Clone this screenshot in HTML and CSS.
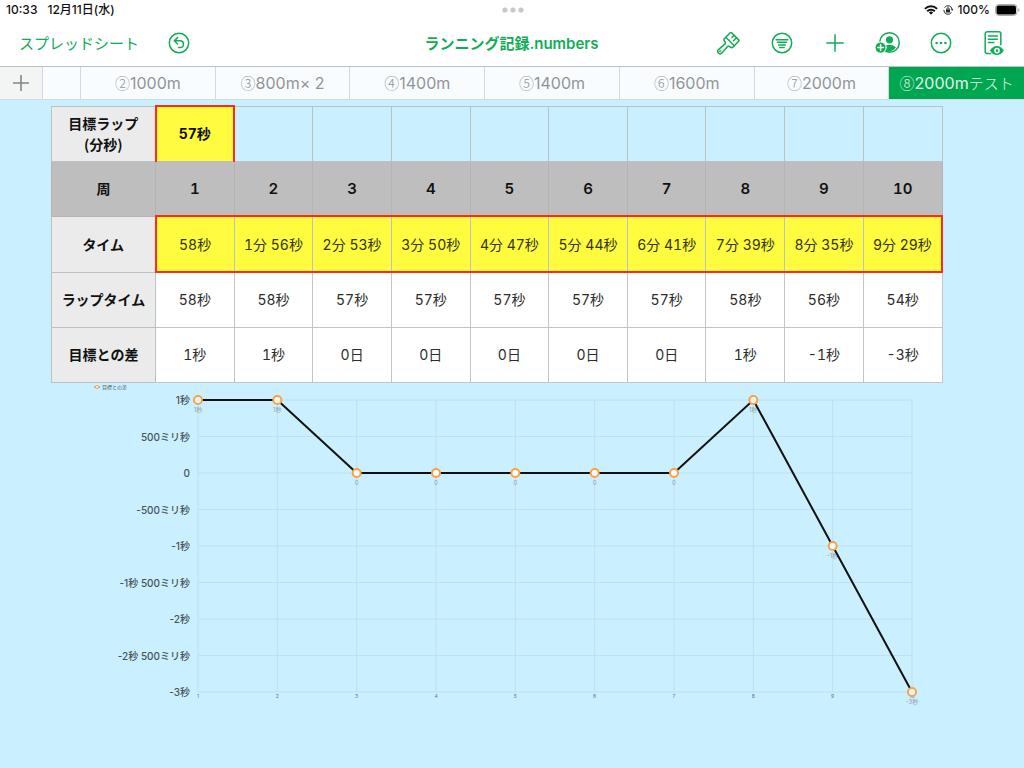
FILE: index.html
```html
<!DOCTYPE html>
<html lang="ja">
<head>
    <meta charset="UTF-8">
    <meta name="viewport" content="width=device-width, initial-scale=1.0">
    <title>ランニング記録.numbers</title>
    <link rel="stylesheet" href="styles.css">
</head>
<body>

<div class="status-bar">
    <div class="status-left">
        <span>10:33</span>
        <span>12月11日(水)</span>
    </div>
    <svg class="dots" width="22" height="6" viewBox="0 0 22 6" fill="#c8c8c8">
        <circle cx="3" cy="3" r="2.6"/><circle cx="11" cy="3" r="2.6"/><circle cx="19" cy="3" r="2.6"/>
    </svg>
    <div class="status-right">
        <svg width="14" height="10" viewBox="0 0 14 10" fill="none" stroke="#111" stroke-width="2">
            <path d="M0.9 3.9a8.6 8.600 0 0 1 12.200 0M3.200 6.300a5.300 5.300 0 0 1 7.600 0"/>
            <path d="M7 9.8L4.9 7.6a3 3 0 0 1 4.2 0z" fill="#111" stroke="none"/>
        </svg>
        <svg width="10" height="10" viewBox="0 0 10 10" fill="none" stroke="#222" stroke-width="1">
            <path d="M1.500 2.600A4.200 4.200 0 0 1 9.200 5M8.500 7.400A4.200 4.200 0 0 1 0.800 5"/>
            <path d="M8 4.300h2.200L9.200 6z" fill="#222" stroke="none"/>
            <rect x="3" y="4.500" width="4" height="3" fill="#222" stroke="none"/>
            <path d="M4 4.800V3.700a1 1 0 0 1 2 0v1.100"/>
        </svg>
        <span>100%</span>
        <svg width="25" height="12" viewBox="0 0 25 12">
            <rect x="0.5" y="0.5" width="21.5" height="11" rx="3.5" fill="#fff" stroke="#aaa"/>
            <rect x="1.5" y="1.5" width="19.5" height="9" rx="2" fill="#000"/>
            <path d="M23.4 4.2a2 2 0 0 1 0 3.6z" fill="#999"/>
        </svg>
    </div>
</div>

<header class="toolbar">
    <div class="toolbar-left">
        <a href="#" class="back-link">スプレッドシート</a>
        <button class="undo-button" aria-label="取り消す">
            <svg width="22" height="22" viewBox="0 0 22 22">
                <circle cx="11" cy="11" r="9.7"/>
                <path d="M9.6 5.6L6.3 8.8l3.3 3.2M6.5 8.8h5.6a3.3 3.3 0 0 1 0 6.7h-1.4"/>
            </svg>
        </button>
    </div>
    <h1 class="title">ランニング記録.numbers</h1>
    <div class="toolbar-right">
        <button aria-label="フォーマット">
            <svg width="24" height="26" viewBox="0 0 24 26">
                <g transform="translate(10 14.500) rotate(45)">
                    <path d="M-6 -4V-10.500Q-6 -11.500 -5 -11.500H5Q6 -11.500 6 -10.500V-2.500Q6 -0.800 4.300 -0.600L3 -0.400Q1.700 -0.200 1.800 1L2.400 9.600A2.400 2.400 0 0 1 -2.400 9.600L-1.800 1Q-1.700 -0.200 -3 -0.400L-4.300 -0.600Q-6 -0.800 -6 -2.500z"/>
                    <path d="M-6 -4.300H6M-1.500 -11.500V-8.500M2 -11.500V-7.200"/>
                    <circle cx="0" cy="9.600" r="0.400"/>
                </g>
            </svg>
        </button>
        <button aria-label="整理">
            <svg width="22" height="22" viewBox="0 0 22 22">
                <circle cx="11" cy="11" r="9.7"/>
                <path d="M5.2 7.7h11.6M6.4 10.3h9.2M7.6 12.9h6.8M8.8 15.5h4.4"/>
            </svg>
        </button>
        <button aria-label="挿入">
            <svg width="18" height="18" viewBox="0 0 18 18"><path d="M9 0.8v16.4M0.8 9h16.4"/></svg>
        </button>
        <button aria-label="共同制作">
            <svg width="26" height="24" viewBox="0 0 26 24">
                <circle cx="14.5" cy="11.5" r="9.8"/>
                <g class="solid">
                    <circle cx="14.5" cy="8.8" r="3.6"/>
                    <path d="M8 19.300v-3c1.700-1.800 4-2.600 6.500-2.600s5 0.900 6.500 2.800a9.800 9.800 0 0 1-13 2.800z"/>
                    <circle class="badge" cx="5.6" cy="16.6" r="5.6"/>
                </g>
                <path class="white" d="M5.6 13.8v5.600M2.800 16.6h5.600"/>
            </svg>
        </button>
        <button aria-label="その他">
            <svg width="22" height="22" viewBox="0 0 22 22">
                <circle cx="11" cy="11" r="9.7"/>
                <g class="solid"><circle cx="6.6" cy="11" r="1.3"/><circle cx="11" cy="11" r="1.3"/><circle cx="15.4" cy="11" r="1.3"/></g>
            </svg>
        </button>
        <button aria-label="表示モード">
            <svg width="22" height="26" viewBox="0 0 22 26">
                <path d="M7.6 23.6H4.2a2 2 0 0 1-2-2V3.8a2 2 0 0 1 2-2h11.6a2 2 0 0 1 2 2v11"/>
                <path d="M5.400 6h9M5.400 9.300h9M5.400 12.600h5.500"/>
                <path class="solid" d="M7 20.600c3.200-6 10.600-6 13.800 0-3.200 6-10.600 6-13.800 0z"/>
                <circle class="white" cx="14" cy="20.6" r="2.1"/>
            </svg>
        </button>
    </div>
</header>

<nav class="tabs">
    <button class="tab add-tab" aria-label="シートを追加">
        <svg width="18" height="18" viewBox="0 0 18 18"><path d="M9 1v16M1 9h16"/></svg>
    </button>
    <button class="tab" aria-label="前のシート"></button>
    <button class="tab"><span class="kana">②</span>1000m</button>
    <button class="tab"><span class="kana">③</span>800m× 2</button>
    <button class="tab"><span class="kana">④</span>1400m</button>
    <button class="tab"><span class="kana">⑤</span>1400m</button>
    <button class="tab"><span class="kana">⑥</span>1600m</button>
    <button class="tab"><span class="kana">⑦</span>2000m</button>
    <button class="tab active"><span class="kana">⑧</span>2000m<span class="kana">テスト</span></button>
</nav>

<main class="sheet">
    <div class="table-area">
        <table class="laps">
            <tr>
                <th scope="row">目標ラップ<br>(分秒)</th>
                <td class="target">57秒</td>
                <td></td><td></td><td></td><td></td><td></td><td></td><td></td><td></td><td></td>
            </tr>
            <tr class="lap-number">
                <th scope="row">周</th>
                <td>1</td><td>2</td><td>3</td><td>4</td><td>5</td><td>6</td><td>7</td><td>8</td><td>9</td><td>10</td>
            </tr>
            <tr class="time">
                <th scope="row">タイム</th>
                <td>58秒</td><td>1分 56秒</td><td>2分 53秒</td><td>3分 50秒</td><td>4分 47秒</td><td>5分 44秒</td><td>6分 41秒</td><td>7分 39秒</td><td>8分 35秒</td><td>9分 29秒</td>
            </tr>
            <tr class="result">
                <th scope="row">ラップタイム</th>
                <td>58秒</td><td>58秒</td><td>57秒</td><td>57秒</td><td>57秒</td><td>57秒</td><td>57秒</td><td>58秒</td><td>56秒</td><td>54秒</td>
            </tr>
            <tr class="result">
                <th scope="row">目標との差</th>
                <td>1秒</td><td>1秒</td><td>0日</td><td>0日</td><td>0日</td><td>0日</td><td>0日</td><td>1秒</td><td>-1秒</td><td>-3秒</td>
            </tr>
        </table>
    </div>
    <svg class="chart" id="chart" viewBox="0 0 1024 330" role="img" aria-label="目標との差"></svg>
</main>

<script src="chart.js"></script>
</body>
</html>
```

FILE: styles.css
```css
* {
    box-sizing: border-box;
}
body {
    margin: 0;
    min-height: 100vh;
    background-color: #caefff;
    font-family: Inter, 'Noto Sans CJK JP', sans-serif;
    color: #111;
}
button {
    margin: 0;
    padding: 0;
    border: none;
    background: none;
    font-family: inherit;
    cursor: pointer;
}
svg {
    display: block;
}

/* status bar */
.status-bar {
    display: grid;
    grid-template-columns: 1fr auto 1fr;
    align-items: center;
    height: 19px;
    padding: 0 4px 0 6px;
    background-color: #fff;
    font-size: 12px;
    font-weight: 500;
    line-height: 18px;
}
.status-left,
.status-right {
    display: flex;
    align-items: center;
}
.status-left {
    gap: 10px;
}
.status-right {
    justify-content: flex-end;
    gap: 5px;
}

/* toolbar */
.toolbar {
    display: grid;
    grid-template-columns: 1fr auto 1fr;
    align-items: center;
    height: 47px;
    padding: 0 4px 0 19px;
    background-color: #fff;
    color: #12ac58;
}
.toolbar-left {
    display: flex;
    align-items: center;
    gap: 29px;
}
.back-link {
    color: inherit;
    font-size: 15px;
    text-decoration: none;
    white-space: nowrap;
}
.title {
    margin: 0 16px 0 0;
    font-size: 15px;
    font-weight: 600;
    white-space: nowrap;
}
.toolbar-right {
    display: flex;
    justify-content: flex-end;
}
.toolbar-right button {
    display: flex;
    justify-content: center;
    align-items: center;
    width: 53px;
    height: 40px;
}
.toolbar svg {
    fill: none;
    stroke: #12ac58;
    stroke-width: 1.5;
    stroke-linecap: round;
    stroke-linejoin: round;
}
.toolbar .solid {
    fill: #12ac58;
    stroke: none;
}
.toolbar .badge {
    stroke: #fff;
    stroke-width: 1;
}
.toolbar .white {
    stroke: #fff;
}

/* sheet tabs */
.tabs {
    display: grid;
    grid-template-columns: 43px 38px repeat(7, 1fr);
    height: 34px;
    border-top: 1px solid #bfc1c2;
    border-bottom: 1px solid #cfdde3;
}
.tab {
    border-right: 1px solid #d4d9dc;
    background-color: #f8fcff;
    color: #929496;
    font-size: 16px;
    line-height: 32px;
    white-space: nowrap;
}
.add-tab {
    display: flex;
    justify-content: center;
    align-items: center;
    background-color: #f3f4f4;
}
.add-tab svg {
    fill: none;
    stroke: #858687;
    stroke-width: 1.6;
}
.tab.active {
    border-right: none;
    background-color: #00a650;
    color: #e2f5ea;
}
.kana {
    font-family: 'Noto Sans CJK JP', sans-serif;
    font-size: 15px;
    font-weight: 300;
}

/* table */
.table-area {
    padding: 5px 81px 0 51px;
}
.laps {
    width: 100%;
    table-layout: fixed;
    border-collapse: collapse;
    font-size: 14px;
    font-variant-numeric: tabular-nums;
    line-height: 21px;
    text-align: center;
}
.laps th,
.laps td {
    height: 55px;
    padding: 0;
    border: 1px solid #b9c3c7;
    white-space: nowrap;
}
.laps th {
    width: 104px;
    background-color: #ebebeb;
    font-family: 'Noto Sans CJK JP', sans-serif;
    font-weight: 700;
}
.laps .target {
    border: 2px solid #ff2a1c;
    border-bottom: 1px solid #bdbebd;
    background-color: #fffb3e;
    font-weight: 700;
}
.lap-number th,
.lap-number td {
    border-color: #b3b4b3;
    background-color: #bdbebd;
}
.lap-number td {
    font-size: 15px;
    font-weight: 600;
}
.laps .time td {
    height: 56px;
    border-top: 2px solid #ff2a1c;
    border-bottom: 2px solid #ff2a1c;
    background-color: #fffb3e;
    color: #333311;
}
.time td:nth-child(2) {
    border-left: 2px solid #ff2a1c;
}
.time td:last-child {
    border-right: 2px solid #ff2a1c;
}
.result td {
    border-color: #c4c4c4;
    background-color: #fff;
    color: #2c2c2c;
}

/* chart */
.chart {
    width: 100%;
}
.grid-line {
    stroke: #bfe0ec;
    stroke-width: 1;
}
.axis-label {
    fill: #46545a;
    font-size: 10px;
    font-weight: 500;
    text-anchor: end;
}
.small-label {
    fill: #66757b;
    font-size: 5px;
    text-anchor: middle;
}
.value-label {
    fill: #8f9da3;
    font-size: 6px;
    text-anchor: middle;
}
.legend {
    fill: #55636a;
    font-size: 5px;
}
.line {
    fill: none;
    stroke: #111;
    stroke-width: 2;
}
.point {
    fill: #fff;
    stroke: #ff9f43;
    stroke-width: 2;
}
```

FILE: chart.js
```js
const values = [1, 1, 0, 0, 0, 0, 0, 1, -1, -3];
const axisLabels = ['1秒', '500ミリ秒', '0', '-500ミリ秒', '-1秒', '-1秒 500ミリ秒', '-2秒', '-2秒 500ミリ秒', '-3秒'];

const left = 198;
const right = 912;
const topY = 17;
const bottomY = 309;
const stepX = (right - left) / (values.length - 1);
const stepY = (bottomY - topY) / (axisLabels.length - 1);

const chart = document.getElementById('chart');

// Add one svg element to the chart
function add(name, attrs, text) {
    const el = document.createElementNS('http://www.w3.org/2000/svg', name);
    for (const key in attrs) {
        el.setAttribute(key, attrs[key]);
    }
    if (text) el.textContent = text;
    chart.appendChild(el);
}

const points = values.map((value, i) => ({
    x: left + i * stepX,
    y: topY + (1 - value) * 2 * stepY
}));

// Legend
add('line', { x1: 94, x2: 100, y1: 4, y2: 4, stroke: '#111', 'stroke-width': 0.5 });
add('circle', { cx: 97, cy: 4, r: 1.5, fill: '#fff', stroke: '#ff9f43', 'stroke-width': 1 });
add('text', { x: 102, y: 6, class: 'legend' }, '目標との差');

// Grid and axis labels
axisLabels.forEach((label, i) => {
    const y = topY + i * stepY;
    add('line', { x1: left, x2: right, y1: y, y2: y, class: 'grid-line' });
    add('text', { x: 190, y: y + 4, class: 'axis-label' }, label);
});
points.forEach((p, i) => {
    add('line', { x1: p.x, x2: p.x, y1: topY, y2: bottomY, class: 'grid-line' });
    add('text', { x: p.x, y: bottomY + 6, class: 'small-label' }, String(i + 1));
});

// Line, values and markers
points.forEach((p, i) => {
    add('text', { x: p.x, y: p.y + 12, class: 'value-label' }, values[i] === 0 ? '0' : values[i] + '秒');
});
add('polyline', { points: points.map(p => p.x + ',' + p.y).join(' '), class: 'line' });
points.forEach(p => {
    add('circle', { cx: p.x, cy: p.y, r: 4, class: 'point' });
});
```
